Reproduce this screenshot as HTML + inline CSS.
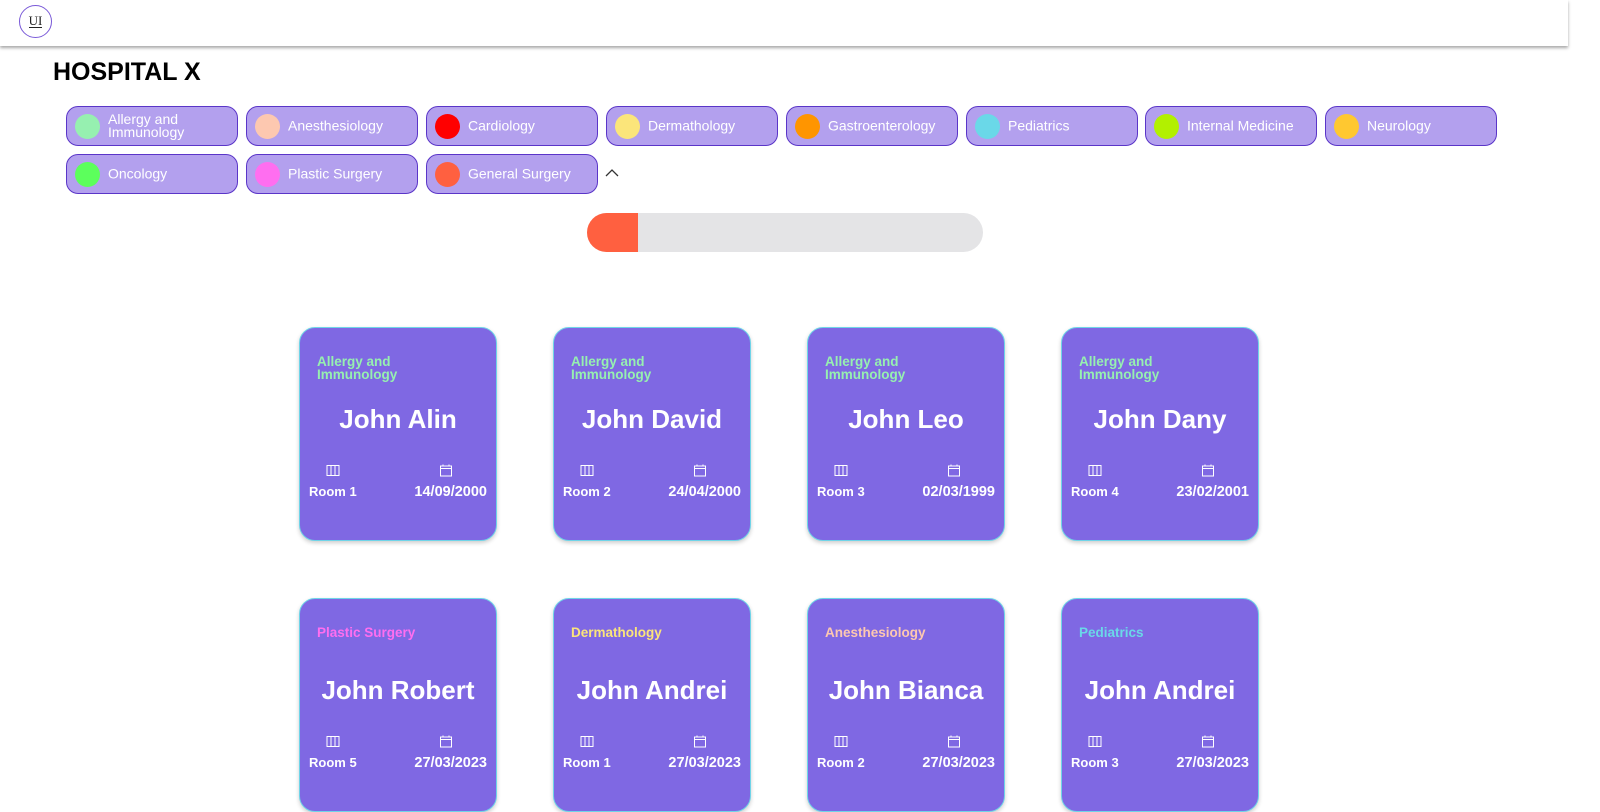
<!DOCTYPE html>
<html><head><meta charset="utf-8"><style>
*{box-sizing:border-box;margin:0;padding:0}
body{width:1600px;height:807px;overflow:hidden;background:#fff;font-family:"Liberation Sans",sans-serif;position:relative}
.hdr{position:absolute;left:0;top:0;width:1568px;height:46px;background:#fff;box-shadow:0 2px 3px rgba(0,0,0,.35)}
.logo{position:absolute;left:19px;top:5px;width:33px;height:33px;border:1.5px solid #7a5ad8;border-radius:50%;font-family:"Liberation Serif",serif;font-size:13px;text-align:center;line-height:29px;color:#222}
.logo span{border-bottom:1px solid #222;line-height:12px;display:inline-block}
h1{position:absolute;left:53px;top:58px;font-size:25px;font-weight:bold;color:#000}
.chip{position:absolute;width:172px;height:40px;background:#b3a0ee;border:1px solid #5a35c8;border-radius:12px;color:#fff;font-size:14px}
.chip i{position:absolute;left:8px;top:7px;width:25px;height:25px;border-radius:50%}
.chip span{position:absolute;left:41px;top:50%;transform:translateY(-50%);line-height:13px}
.bar{position:absolute;left:587px;top:213px;width:396px;height:39px;border-radius:20px;background:#e4e4e6;overflow:hidden}
.bar div{width:51px;height:100%;background:#ff6040}
.card{position:absolute;width:198px;height:214px;background:#7f68e3;border:1.5px solid #6fd4e8;border-radius:16px;color:#fff;box-shadow:0 2px 4px rgba(0,0,0,.2)}
.card .sp{position:absolute;left:17px;top:27px;font-size:13.5px;font-weight:bold;line-height:13px}
.card .nm{position:absolute;left:0;width:100%;top:76px;text-align:center;font-size:26px;font-weight:bold}
.card .r{position:absolute;left:9px;top:156px;font-size:13px;font-weight:bold}
.card .d{position:absolute;right:9px;top:156px;font-size:14.5px;font-weight:bold}
.card svg{position:absolute;top:136px}
</style></head><body>
<div class="hdr"><div class="logo"><span>UI</span></div></div>
<h1>HOSPITAL X</h1>
<div class="chip" style="left:66px;top:106px"><i style="background:#96f0b0"></i><span>Allergy and<br>Immunology</span></div>
<div class="chip" style="left:246px;top:106px"><i style="background:#fdc8b0"></i><span>Anesthesiology</span></div>
<div class="chip" style="left:426px;top:106px"><i style="background:#ff0000"></i><span>Cardiology</span></div>
<div class="chip" style="left:606px;top:106px"><i style="background:#fbe57a"></i><span>Dermathology</span></div>
<div class="chip" style="left:786px;top:106px"><i style="background:#ff9500"></i><span>Gastroenterology</span></div>
<div class="chip" style="left:966px;top:106px"><i style="background:#6ad8e8"></i><span>Pediatrics</span></div>
<div class="chip" style="left:1145px;top:106px"><i style="background:#b2f000"></i><span>Internal Medicine</span></div>
<div class="chip" style="left:1325px;top:106px"><i style="background:#ffc830"></i><span>Neurology</span></div>
<div class="chip" style="left:66px;top:154px"><i style="background:#5cff5c"></i><span>Oncology</span></div>
<div class="chip" style="left:246px;top:154px"><i style="background:#ff6ef0"></i><span>Plastic Surgery</span></div>
<div class="chip" style="left:426px;top:154px"><i style="background:#ff6040"></i><span>General Surgery</span></div>
<svg style="position:absolute;left:605px;top:168px" width="14" height="10"><path d="M1 8 L7 2 L13 8" fill="none" stroke="#333" stroke-width="1.3"/></svg>
<div class="bar"><div></div></div>

<div class="card" style="left:299px;top:327px"><div class="sp" style="color:#96f0b0">Allergy and<br>Immunology</div><div class="nm">John Alin</div><svg style="left:26px" width="14" height="13"><path d="M1 1.5h12v10H1zM5 1.5v10M9 1.5v10" fill="none" stroke="#fff" stroke-width="1"/></svg><svg style="left:139px" width="14" height="13"><path d="M1.5 2h11v10h-11zM1.5 4.5h11M4 0.5v2M10 0.5v2" fill="none" stroke="#fff" stroke-width="1"/></svg><div class="r">Room 1</div><div class="d">14/09/2000</div></div>
<div class="card" style="left:553px;top:327px"><div class="sp" style="color:#96f0b0">Allergy and<br>Immunology</div><div class="nm">John David</div><svg style="left:26px" width="14" height="13"><path d="M1 1.5h12v10H1zM5 1.5v10M9 1.5v10" fill="none" stroke="#fff" stroke-width="1"/></svg><svg style="left:139px" width="14" height="13"><path d="M1.5 2h11v10h-11zM1.5 4.5h11M4 0.5v2M10 0.5v2" fill="none" stroke="#fff" stroke-width="1"/></svg><div class="r">Room 2</div><div class="d">24/04/2000</div></div>
<div class="card" style="left:807px;top:327px"><div class="sp" style="color:#96f0b0">Allergy and<br>Immunology</div><div class="nm">John Leo</div><svg style="left:26px" width="14" height="13"><path d="M1 1.5h12v10H1zM5 1.5v10M9 1.5v10" fill="none" stroke="#fff" stroke-width="1"/></svg><svg style="left:139px" width="14" height="13"><path d="M1.5 2h11v10h-11zM1.5 4.5h11M4 0.5v2M10 0.5v2" fill="none" stroke="#fff" stroke-width="1"/></svg><div class="r">Room 3</div><div class="d">02/03/1999</div></div>
<div class="card" style="left:1061px;top:327px"><div class="sp" style="color:#96f0b0">Allergy and<br>Immunology</div><div class="nm">John Dany</div><svg style="left:26px" width="14" height="13"><path d="M1 1.5h12v10H1zM5 1.5v10M9 1.5v10" fill="none" stroke="#fff" stroke-width="1"/></svg><svg style="left:139px" width="14" height="13"><path d="M1.5 2h11v10h-11zM1.5 4.5h11M4 0.5v2M10 0.5v2" fill="none" stroke="#fff" stroke-width="1"/></svg><div class="r">Room 4</div><div class="d">23/02/2001</div></div>

<div class="card" style="left:299px;top:598px"><div class="sp" style="color:#ff6ef0">Plastic Surgery</div><div class="nm">John Robert</div><svg style="left:26px" width="14" height="13"><path d="M1 1.5h12v10H1zM5 1.5v10M9 1.5v10" fill="none" stroke="#fff" stroke-width="1"/></svg><svg style="left:139px" width="14" height="13"><path d="M1.5 2h11v10h-11zM1.5 4.5h11M4 0.5v2M10 0.5v2" fill="none" stroke="#fff" stroke-width="1"/></svg><div class="r">Room 5</div><div class="d">27/03/2023</div></div>
<div class="card" style="left:553px;top:598px"><div class="sp" style="color:#fbe57a">Dermathology</div><div class="nm">John Andrei</div><svg style="left:26px" width="14" height="13"><path d="M1 1.5h12v10H1zM5 1.5v10M9 1.5v10" fill="none" stroke="#fff" stroke-width="1"/></svg><svg style="left:139px" width="14" height="13"><path d="M1.5 2h11v10h-11zM1.5 4.5h11M4 0.5v2M10 0.5v2" fill="none" stroke="#fff" stroke-width="1"/></svg><div class="r">Room 1</div><div class="d">27/03/2023</div></div>
<div class="card" style="left:807px;top:598px"><div class="sp" style="color:#fdc8b0">Anesthesiology</div><div class="nm">John Bianca</div><svg style="left:26px" width="14" height="13"><path d="M1 1.5h12v10H1zM5 1.5v10M9 1.5v10" fill="none" stroke="#fff" stroke-width="1"/></svg><svg style="left:139px" width="14" height="13"><path d="M1.5 2h11v10h-11zM1.5 4.5h11M4 0.5v2M10 0.5v2" fill="none" stroke="#fff" stroke-width="1"/></svg><div class="r">Room 2</div><div class="d">27/03/2023</div></div>
<div class="card" style="left:1061px;top:598px"><div class="sp" style="color:#6ad8e8">Pediatrics</div><div class="nm">John Andrei</div><svg style="left:26px" width="14" height="13"><path d="M1 1.5h12v10H1zM5 1.5v10M9 1.5v10" fill="none" stroke="#fff" stroke-width="1"/></svg><svg style="left:139px" width="14" height="13"><path d="M1.5 2h11v10h-11zM1.5 4.5h11M4 0.5v2M10 0.5v2" fill="none" stroke="#fff" stroke-width="1"/></svg><div class="r">Room 3</div><div class="d">27/03/2023</div></div>
</body></html>
